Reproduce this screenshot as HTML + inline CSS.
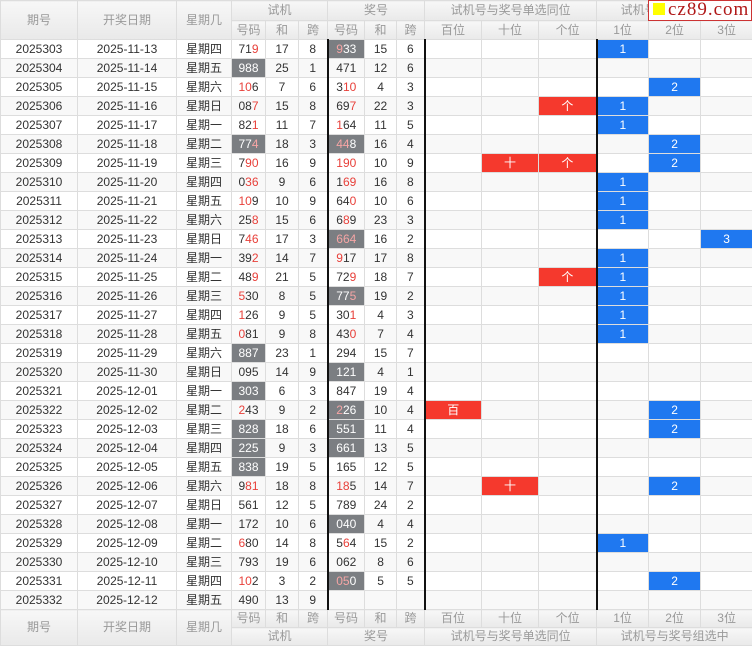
<!DOCTYPE html>
<html><head><meta charset="utf-8"><style>
*{margin:0;padding:0;box-sizing:border-box}
body{width:752px;height:645px;overflow:hidden;background:#fff;font-family:"Liberation Sans","Noto Sans CJK SC",sans-serif;font-size:12px;color:#333;position:relative}
table{border-collapse:collapse;table-layout:fixed;width:752px}
td{border:1px solid #ddd;text-align:center;padding:0;height:19px;line-height:17px;white-space:nowrap;overflow:hidden}
tr.h td{background:linear-gradient(#f7f7f7,#e9e9e9);color:#999;height:20px;font-size:12px}
tr.h2 td{height:19px}
tr.f td{height:18px}
tbody tr:nth-child(even) td{background:#f8f8f8}
.k{border-left:2px solid #111}
.r{color:#e8403a}
td.g{background:#7b7e82!important;color:#fff}
td.g .r{color:#f6a5a5}
td.b{background:#1f78f0!important;color:#fff}
td.d{background:#f5392d!important;color:#fff}
#logo{position:absolute;left:648px;top:0;width:104px;height:21px;background:#fff;border:1px solid #c33;font-family:"Liberation Serif",serif;font-size:19px;color:#b01818;line-height:18px;padding-left:4px;letter-spacing:1px}
#logo i{display:inline-block;width:12px;height:12px;background:#ff0;margin-right:3px;vertical-align:0}
</style></head><body>
<table>
<colgroup><col style="width:77px"><col style="width:99px"><col style="width:55px"><col style="width:34px"><col style="width:33px"><col style="width:29px"><col style="width:37px"><col style="width:32px"><col style="width:28px"><col style="width:57px"><col style="width:57px"><col style="width:58px"><col style="width:52px"><col style="width:52px"><col style="width:52px"></colgroup>
<thead>
<tr class="h"><td rowspan="2">期号</td><td rowspan="2">开奖日期</td><td rowspan="2">星期几</td><td colspan="3">试机</td><td colspan="3">奖号</td><td colspan="3">试机号与奖号单选同位</td><td colspan="3">试机号与奖号组选中</td></tr>
<tr class="h h2"><td>号码</td><td>和</td><td>跨</td><td>号码</td><td>和</td><td>跨</td><td>百位</td><td>十位</td><td>个位</td><td>1位</td><td>2位</td><td>3位</td></tr>
</thead>
<tbody>
<tr><td>2025303</td><td>2025-11-13</td><td>星期四</td><td>71<span class="r">9</span></td><td>17</td><td>8</td><td class="k g"><span class="r">9</span>33</td><td>15</td><td>6</td><td class="k"></td><td></td><td></td><td class="k b">1</td><td></td><td></td></tr>
<tr><td>2025304</td><td>2025-11-14</td><td>星期五</td><td class="g">988</td><td>25</td><td>1</td><td class="k">471</td><td>12</td><td>6</td><td class="k"></td><td></td><td></td><td class="k"></td><td></td><td></td></tr>
<tr><td>2025305</td><td>2025-11-15</td><td>星期六</td><td><span class="r">10</span>6</td><td>7</td><td>6</td><td class="k">3<span class="r">10</span></td><td>4</td><td>3</td><td class="k"></td><td></td><td></td><td class="k"></td><td class="b">2</td><td></td></tr>
<tr><td>2025306</td><td>2025-11-16</td><td>星期日</td><td>08<span class="r">7</span></td><td>15</td><td>8</td><td class="k">69<span class="r">7</span></td><td>22</td><td>3</td><td class="k"></td><td></td><td class="d">个</td><td class="k b">1</td><td></td><td></td></tr>
<tr><td>2025307</td><td>2025-11-17</td><td>星期一</td><td>82<span class="r">1</span></td><td>11</td><td>7</td><td class="k"><span class="r">1</span>64</td><td>11</td><td>5</td><td class="k"></td><td></td><td></td><td class="k b">1</td><td></td><td></td></tr>
<tr><td>2025308</td><td>2025-11-18</td><td>星期二</td><td class="g">77<span class="r">4</span></td><td>18</td><td>3</td><td class="k g"><span class="r">44</span>8</td><td>16</td><td>4</td><td class="k"></td><td></td><td></td><td class="k"></td><td class="b">2</td><td></td></tr>
<tr><td>2025309</td><td>2025-11-19</td><td>星期三</td><td>7<span class="r">90</span></td><td>16</td><td>9</td><td class="k"><span class="r">190</span></td><td>10</td><td>9</td><td class="k"></td><td class="d">十</td><td class="d">个</td><td class="k"></td><td class="b">2</td><td></td></tr>
<tr><td>2025310</td><td>2025-11-20</td><td>星期四</td><td>0<span class="r">36</span></td><td>9</td><td>6</td><td class="k">1<span class="r">69</span></td><td>16</td><td>8</td><td class="k"></td><td></td><td></td><td class="k b">1</td><td></td><td></td></tr>
<tr><td>2025311</td><td>2025-11-21</td><td>星期五</td><td><span class="r">10</span>9</td><td>10</td><td>9</td><td class="k">64<span class="r">0</span></td><td>10</td><td>6</td><td class="k"></td><td></td><td></td><td class="k b">1</td><td></td><td></td></tr>
<tr><td>2025312</td><td>2025-11-22</td><td>星期六</td><td>25<span class="r">8</span></td><td>15</td><td>6</td><td class="k">6<span class="r">8</span>9</td><td>23</td><td>3</td><td class="k"></td><td></td><td></td><td class="k b">1</td><td></td><td></td></tr>
<tr><td>2025313</td><td>2025-11-23</td><td>星期日</td><td>7<span class="r">46</span></td><td>17</td><td>3</td><td class="k g"><span class="r">664</span></td><td>16</td><td>2</td><td class="k"></td><td></td><td></td><td class="k"></td><td></td><td class="b">3</td></tr>
<tr><td>2025314</td><td>2025-11-24</td><td>星期一</td><td>39<span class="r">2</span></td><td>14</td><td>7</td><td class="k"><span class="r">9</span>17</td><td>17</td><td>8</td><td class="k"></td><td></td><td></td><td class="k b">1</td><td></td><td></td></tr>
<tr><td>2025315</td><td>2025-11-25</td><td>星期二</td><td>48<span class="r">9</span></td><td>21</td><td>5</td><td class="k">72<span class="r">9</span></td><td>18</td><td>7</td><td class="k"></td><td></td><td class="d">个</td><td class="k b">1</td><td></td><td></td></tr>
<tr><td>2025316</td><td>2025-11-26</td><td>星期三</td><td><span class="r">5</span>30</td><td>8</td><td>5</td><td class="k g">77<span class="r">5</span></td><td>19</td><td>2</td><td class="k"></td><td></td><td></td><td class="k b">1</td><td></td><td></td></tr>
<tr><td>2025317</td><td>2025-11-27</td><td>星期四</td><td><span class="r">1</span>26</td><td>9</td><td>5</td><td class="k">30<span class="r">1</span></td><td>4</td><td>3</td><td class="k"></td><td></td><td></td><td class="k b">1</td><td></td><td></td></tr>
<tr><td>2025318</td><td>2025-11-28</td><td>星期五</td><td><span class="r">0</span>81</td><td>9</td><td>8</td><td class="k">43<span class="r">0</span></td><td>7</td><td>4</td><td class="k"></td><td></td><td></td><td class="k b">1</td><td></td><td></td></tr>
<tr><td>2025319</td><td>2025-11-29</td><td>星期六</td><td class="g">887</td><td>23</td><td>1</td><td class="k">294</td><td>15</td><td>7</td><td class="k"></td><td></td><td></td><td class="k"></td><td></td><td></td></tr>
<tr><td>2025320</td><td>2025-11-30</td><td>星期日</td><td>095</td><td>14</td><td>9</td><td class="k g">121</td><td>4</td><td>1</td><td class="k"></td><td></td><td></td><td class="k"></td><td></td><td></td></tr>
<tr><td>2025321</td><td>2025-12-01</td><td>星期一</td><td class="g">303</td><td>6</td><td>3</td><td class="k">847</td><td>19</td><td>4</td><td class="k"></td><td></td><td></td><td class="k"></td><td></td><td></td></tr>
<tr><td>2025322</td><td>2025-12-02</td><td>星期二</td><td><span class="r">2</span>43</td><td>9</td><td>2</td><td class="k g"><span class="r">2</span>26</td><td>10</td><td>4</td><td class="k d">百</td><td></td><td></td><td class="k"></td><td class="b">2</td><td></td></tr>
<tr><td>2025323</td><td>2025-12-03</td><td>星期三</td><td class="g">828</td><td>18</td><td>6</td><td class="k g">551</td><td>11</td><td>4</td><td class="k"></td><td></td><td></td><td class="k"></td><td class="b">2</td><td></td></tr>
<tr><td>2025324</td><td>2025-12-04</td><td>星期四</td><td class="g">225</td><td>9</td><td>3</td><td class="k g">661</td><td>13</td><td>5</td><td class="k"></td><td></td><td></td><td class="k"></td><td></td><td></td></tr>
<tr><td>2025325</td><td>2025-12-05</td><td>星期五</td><td class="g">838</td><td>19</td><td>5</td><td class="k">165</td><td>12</td><td>5</td><td class="k"></td><td></td><td></td><td class="k"></td><td></td><td></td></tr>
<tr><td>2025326</td><td>2025-12-06</td><td>星期六</td><td>9<span class="r">81</span></td><td>18</td><td>8</td><td class="k"><span class="r">18</span>5</td><td>14</td><td>7</td><td class="k"></td><td class="d">十</td><td></td><td class="k"></td><td class="b">2</td><td></td></tr>
<tr><td>2025327</td><td>2025-12-07</td><td>星期日</td><td>561</td><td>12</td><td>5</td><td class="k">789</td><td>24</td><td>2</td><td class="k"></td><td></td><td></td><td class="k"></td><td></td><td></td></tr>
<tr><td>2025328</td><td>2025-12-08</td><td>星期一</td><td>172</td><td>10</td><td>6</td><td class="k g">040</td><td>4</td><td>4</td><td class="k"></td><td></td><td></td><td class="k"></td><td></td><td></td></tr>
<tr><td>2025329</td><td>2025-12-09</td><td>星期二</td><td><span class="r">6</span>80</td><td>14</td><td>8</td><td class="k">5<span class="r">6</span>4</td><td>15</td><td>2</td><td class="k"></td><td></td><td></td><td class="k b">1</td><td></td><td></td></tr>
<tr><td>2025330</td><td>2025-12-10</td><td>星期三</td><td>793</td><td>19</td><td>6</td><td class="k">062</td><td>8</td><td>6</td><td class="k"></td><td></td><td></td><td class="k"></td><td></td><td></td></tr>
<tr><td>2025331</td><td>2025-12-11</td><td>星期四</td><td><span class="r">10</span>2</td><td>3</td><td>2</td><td class="k g"><span class="r">05</span>0</td><td>5</td><td>5</td><td class="k"></td><td></td><td></td><td class="k"></td><td class="b">2</td><td></td></tr>
<tr><td>2025332</td><td>2025-12-12</td><td>星期五</td><td>490</td><td>13</td><td>9</td><td class="k"></td><td></td><td></td><td class="k"></td><td></td><td></td><td class="k"></td><td></td><td></td></tr>
</tbody>
<tfoot>
<tr class="h f"><td rowspan="2">期号</td><td rowspan="2">开奖日期</td><td rowspan="2">星期几</td><td>号码</td><td>和</td><td>跨</td><td>号码</td><td>和</td><td>跨</td><td>百位</td><td>十位</td><td>个位</td><td>1位</td><td>2位</td><td>3位</td></tr>
<tr class="h f"><td colspan="3">试机</td><td colspan="3">奖号</td><td colspan="3">试机号与奖号单选同位</td><td colspan="3">试机号与奖号组选中</td></tr>
</tfoot>
</table>
<div id="logo"><i></i>cz89.com</div>
</body></html>
